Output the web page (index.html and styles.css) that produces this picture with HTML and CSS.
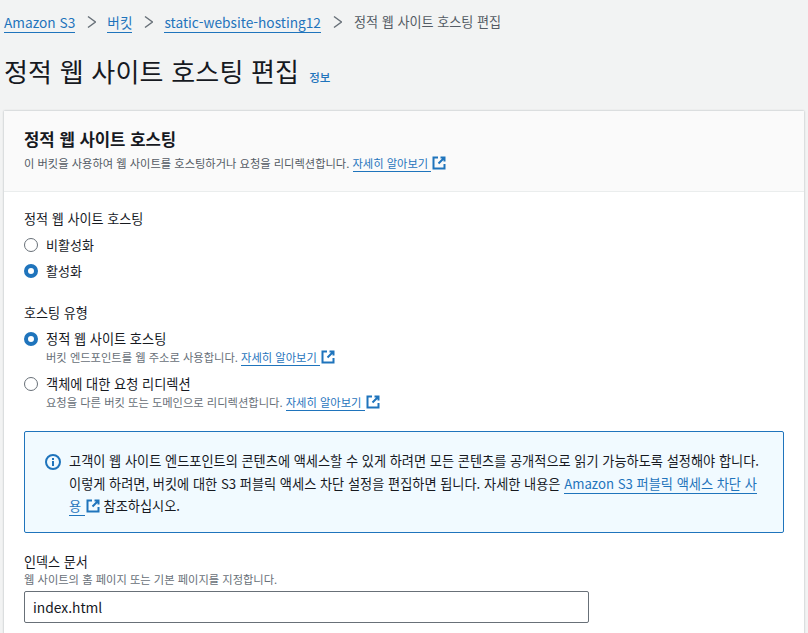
FILE: index.html
```html
<!DOCTYPE html>
<html lang="ko">
<head>
<meta charset="utf-8">
<title>정적 웹 사이트 호스팅 편집</title>
<link rel="stylesheet" href="styles.css">
</head>
<body>
<svg class="defs" width="0" height="0" aria-hidden="true">
  <symbol id="ext" viewBox="0 0 14 14"><path d="M6 1.5H1.5v11h11V8M8.5 1.5h4v4M12.5 1.5L6.5 7.5" fill="none" stroke="currentColor" stroke-width="2"/></symbol>
</svg>
<nav class="crumbs">
  <a class="link" href="#">Amazon S3</a>
  <svg class="chev" viewBox="0 0 10 14"><path d="M2 1.5L9.5 7 2 12.5" fill="none" stroke="currentColor" stroke-width="1.5"/></svg>
  <a class="link" href="#">버킷</a>
  <svg class="chev" viewBox="0 0 10 14"><path d="M2 1.5L9.5 7 2 12.5" fill="none" stroke="currentColor" stroke-width="1.5"/></svg>
  <a class="link" href="#">static-website-hosting12</a>
  <svg class="chev" viewBox="0 0 10 14"><path d="M2 1.5L9.5 7 2 12.5" fill="none" stroke="currentColor" stroke-width="1.5"/></svg>
  <span class="current">정적 웹 사이트 호스팅 편집</span>
</nav>
<header class="title-row">
  <h1>정적 웹 사이트 호스팅 편집</h1>
  <a class="info" href="#">정보</a>
</header>
<main class="card">
  <section class="card-head">
    <h2>정적 웹 사이트 호스팅</h2>
    <p class="sub">이 버킷을 사용하여 웹 사이트를 호스팅하거나 요청을 리디렉션합니다. <a class="link" href="#">자세히 알아보기 </a><svg class="ext"><use href="#ext"/></svg></p>
  </section>
  <section class="card-body">
    <div class="label first">정적 웹 사이트 호스팅</div>
    <div class="radio"><span class="dot"></span><span>비활성화</span></div>
    <div class="radio"><span class="dot on"></span><span>활성화</span></div>
    <div class="label second">호스팅 유형</div>
    <div class="radio tall">
      <span class="dot on"></span>
      <div><div>정적 웹 사이트 호스팅</div>
      <p class="desc">버킷 엔드포인트를 웹 주소로 사용합니다. <a class="link" href="#">자세히 알아보기 </a><svg class="ext"><use href="#ext"/></svg></p></div>
    </div>
    <div class="radio tall">
      <span class="dot"></span>
      <div><div>객체에 대한 요청 리디렉션</div>
      <p class="desc">요청을 다른 버킷 또는 도메인으로 리디렉션합니다. <a class="link" href="#">자세히 알아보기 </a><svg class="ext"><use href="#ext"/></svg></p></div>
    </div>
    <div class="alert">
      <svg class="alert-icon" viewBox="0 0 16 16"><circle cx="8" cy="8" r="7" fill="none" stroke="currentColor" stroke-width="2"/><rect x="7" y="7" width="2" height="5" fill="currentColor"/><rect x="7" y="4" width="2" height="2" fill="currentColor"/></svg>
      <p>고객이 웹 사이트 엔드포인트의 콘텐츠에 액세스할 수 있게 하려면 모든 콘텐츠를 공개적으로 읽기 가능하도록 설정해야 합니다. 이렇게 하려면, 버킷에 대한 S3 퍼블릭 액세스 차단 설정을 편집하면 됩니다. 자세한 내용은 <a class="link" href="#">Amazon S3 퍼블릭 액세스 차단 사용 </a><svg class="ext"><use href="#ext"/></svg> 참조하십시오.</p>
    </div>
    <label class="label index-label" for="index">인덱스 문서</label>
    <p class="desc">웹 사이트의 홈 페이지 또는 기본 페이지를 지정합니다.</p>
    <input class="field" id="index" value="index.html">
  </section>
</main>
</body>
</html>
```
FILE: styles.css
```css
* { box-sizing: border-box; }
html, body { margin: 0; height: 633px; overflow: hidden; }
body {
  background: #f2f3f3;
  color: #16191f;
  font-family: "Noto Sans CJK KR", "Noto Sans", sans-serif;
  font-size: 13px;
  line-height: 20px;
}
.defs { position: absolute; }
p { margin: 0; }
.link { color: #1f74bc; text-decoration: none; border-bottom: 1px solid #1f74bc; }
.crumbs {
  display: flex;
  align-items: center;
  height: 20px;
  margin-top: 12px;
  padding-left: 4px;
  gap: 11px;
  font-size: 13.7px;
}
.crumbs .link { line-height: 20px; }
.chev { width: 10px; height: 14px; color: #687078; flex: none; }
.current { color: #545b64; font-size: 13.1px; margin-left: 1px; }
.title-row {
  display: flex;
  align-items: baseline;
  height: 46px;
  margin-top: 23px;
  padding-left: 4px;
  gap: 10px;
}
h1 { margin: 0; font-size: 26px; font-weight: 400; line-height: 32px; letter-spacing: .2px; }
.info { color: #1f74bc; font-size: 11.5px; font-weight: 500; text-decoration: none; }
.card {
  width: 800px;
  margin: 10px 0 0 4px;
  background: #fff;
  box-shadow: 0 0 2px rgba(0,28,36,.3);
}
.card-head {
  height: 81px;
  padding: 16px 20px 0;
  background: #fafafa;
  border-bottom: 1px solid #eaeded;
}
h2 { margin: 0; font-size: 16.7px; line-height: 24px; font-weight: 700; }
.sub { font-size: 11.25px; line-height: 16px; color: #545b64; margin-top: 4px; }
.ext { width: 14px; height: 14px; color: #1f74bc; vertical-align: -2px; margin-left: 1px; }
.card-body { padding: 17px 20px 40px; background: #fff; }
.label { font-size: 13.1px; line-height: 20px; }
.radio { display: flex; gap: 8px; align-items: center; height: 26px; font-size: 13px; }
.first { margin-bottom: 3px; }
.second { margin: 19px 0 6px; }
.radio.tall { height: auto; align-items: flex-start; margin-bottom: 9px; line-height: 20px; font-size: 13.2px; }
.tall .dot { margin-top: 3px; }
.dot { width: 14px; height: 14px; border-radius: 50%; border: 1.5px solid #687078; background: #fff; flex: none; }
.dot.on { border: 4px solid #1f74bc; }
.desc { font-size: 11.27px; line-height: 16px; color: #687078; }
.alert {
  display: flex;
  gap: 8px;
  margin-top: 21px;
  width: 760px;
  height: 102px;
  padding: 18px 20px;
  background: #f1faff;
  border: 1px solid #1f74bc;
  border-radius: 2px;
  font-size: 13.2px;
  line-height: 22.5px;
}
.alert-icon { width: 16px; height: 16px; flex: none; color: #1f74bc; margin-top: 4px; }
.index-label { display: block; margin-top: 19px; line-height: 19px; }
.field {
  display: block;
  width: 565px;
  height: 32px;
  margin-top: 4px;
  padding: 0 8px;
  border: 1px solid #687078;
  border-radius: 2px;
  font: 13.8px "Noto Sans CJK KR", "Noto Sans", sans-serif;
  color: #16191f;
  background: #fff;
}
```
